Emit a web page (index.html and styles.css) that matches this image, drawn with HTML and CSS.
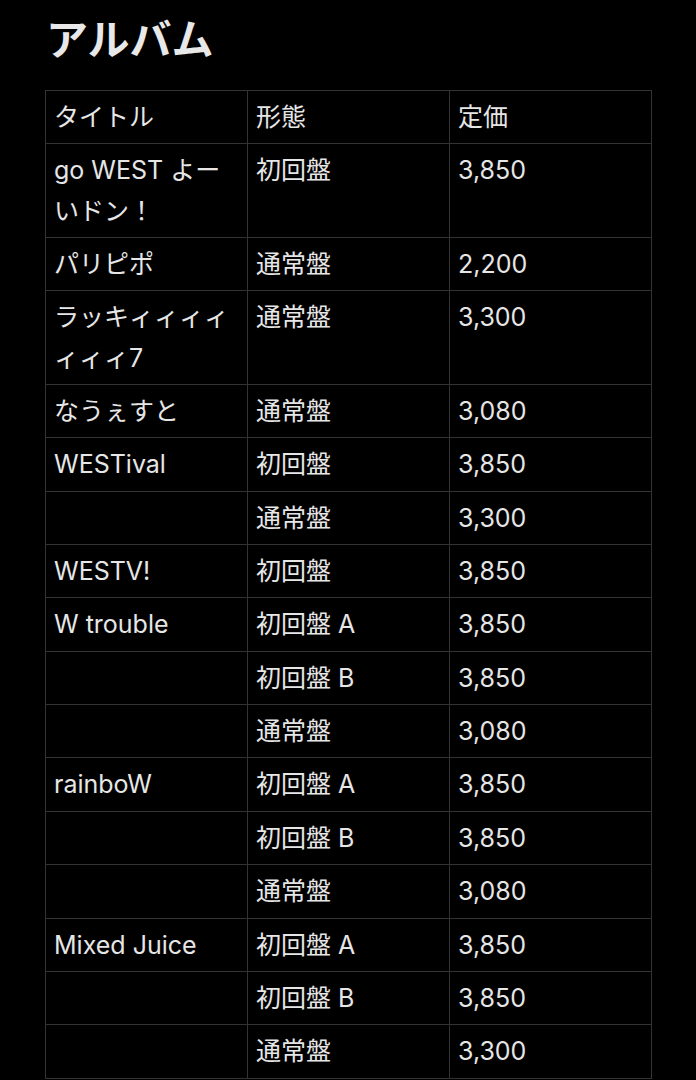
FILE: index.html
```html
<!DOCTYPE html>
<html lang="ja">
<head>
<meta charset="utf-8">
<title>アルバム</title>
<link rel="stylesheet" href="styles.css">
</head>
<body>
<main class="page">
  <h1 class="title">アルバム</h1>
  <table class="albums">
    <colgroup><col><col><col></colgroup>
    <thead>
      <tr><th>タイトル</th><th>形態</th><th>定価</th></tr>
    </thead>
    <tbody>
      <tr><td>go WEST よーいドン！</td><td>初回盤</td><td>3,850</td></tr>
      <tr><td>パリピポ</td><td>通常盤</td><td>2,200</td></tr>
      <tr><td>ラッキィィィィィィィ7</td><td>通常盤</td><td>3,300</td></tr>
      <tr><td>なうぇすと</td><td>通常盤</td><td>3,080</td></tr>
      <tr><td>WESTival</td><td>初回盤</td><td>3,850</td></tr>
      <tr><td></td><td>通常盤</td><td>3,300</td></tr>
      <tr><td>WESTV!</td><td>初回盤</td><td>3,850</td></tr>
      <tr><td>W trouble</td><td>初回盤 A</td><td>3,850</td></tr>
      <tr><td></td><td>初回盤 B</td><td>3,850</td></tr>
      <tr><td></td><td>通常盤</td><td>3,080</td></tr>
      <tr><td>rainboW</td><td>初回盤 A</td><td>3,850</td></tr>
      <tr><td></td><td>初回盤 B</td><td>3,850</td></tr>
      <tr><td></td><td>通常盤</td><td>3,080</td></tr>
      <tr><td>Mixed Juice</td><td>初回盤 A</td><td>3,850</td></tr>
      <tr><td></td><td>初回盤 B</td><td>3,850</td></tr>
      <tr><td></td><td>通常盤</td><td>3,300</td></tr>
    </tbody>
  </table>
</main>
</body>
</html>
```
FILE: styles.css
```css
html, body {
  margin: 0;
  padding: 0;
  background: #000;
}
body {
  font-family: Inter, "Noto Sans CJK JP", sans-serif;
  color: #e6e6e6;
}
.page {
  padding: 13px 45px 0 45px;
}
.title {
  margin: 0 0 29px 1px;
  font-size: 42px;
  line-height: 48px;
  font-weight: 700;
  color: #e8e8e8;
  font-family: "Noto Sans CJK JP", sans-serif;
}
.albums {
  width: 607px;
  border-collapse: collapse;
  table-layout: fixed;
  font-size: 25px;
  line-height: 40.35px;
}
.albums th,
.albums td {
  border: 1px solid #333;
  padding: 6px 9px 6px 8px;
  text-align: left;
  vertical-align: top;
  font-weight: 400;
  word-break: break-all;
}
```
